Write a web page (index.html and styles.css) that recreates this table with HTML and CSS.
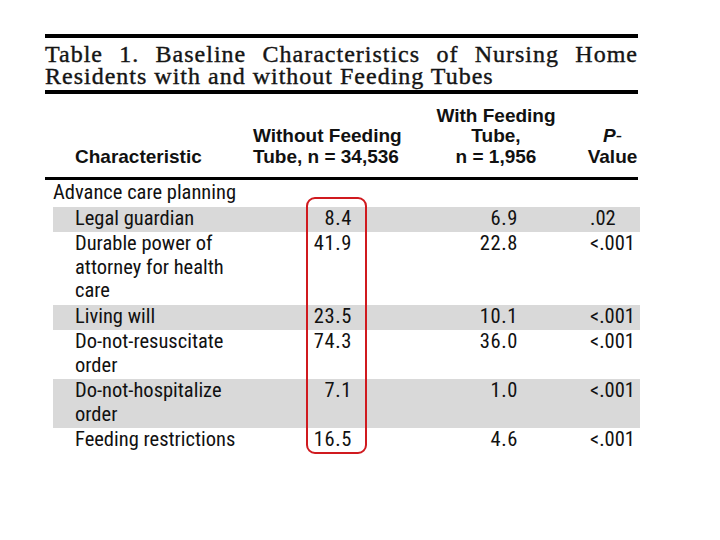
FILE: index.html
```html
<!DOCTYPE html>
<html>
<head>
<meta charset="utf-8">
<link rel="stylesheet" href="styles.css">
</head>
<body>
<div class="page">
  <h1 class="title">Table 1. Baseline Characteristics of Nursing Home Residents with and without Feeding Tubes</h1>
  <div class="head">
    <div class="hc hc-char">Characteristic</div>
    <div class="hc hc-without">Without Feeding<br>Tube, n = 34,536</div>
    <div class="hc hc-with">With Feeding<br>Tube,<br>n = 1,956</div>
    <div class="hc hc-p"><i>P</i><span class="dash">-</span><br>Value</div>
  </div>
  <div class="body">
    <div class="row section"><div class="lab">Advance care planning</div></div>
    <div class="row shade"><div class="lab sub">Legal guardian</div><div class="num">8.4</div><div class="num">6.9</div><div class="pv">.02</div></div>
    <div class="row"><div class="lab sub">Durable power of attorney for health care</div><div class="num">41.9</div><div class="num">22.8</div><div class="pv">&lt;.001</div></div>
    <div class="row shade"><div class="lab sub">Living will</div><div class="num">23.5</div><div class="num">10.1</div><div class="pv">&lt;.001</div></div>
    <div class="row"><div class="lab sub">Do-not-resuscitate order</div><div class="num">74.3</div><div class="num">36.0</div><div class="pv">&lt;.001</div></div>
    <div class="row shade"><div class="lab sub">Do-not-hospitalize order</div><div class="num">7.1</div><div class="num">1.0</div><div class="pv">&lt;.001</div></div>
    <div class="row"><div class="lab sub">Feeding restrictions</div><div class="num">16.5</div><div class="num">4.6</div><div class="pv">&lt;.001</div></div>
    <div class="highlight"></div>
  </div>
</div>
</body>
</html>
```

FILE: styles.css
```css
html, body {
  margin: 0;
  padding: 0;
  background: #ffffff;
}

.page {
  padding: 34px 0 0 45px;
  width: 595px;
}

.title {
  width: 593px;
  margin: 0;
  padding: 5px 0 3px 0;
  border-top: 4px solid #000;
  border-bottom: 4px solid #000;
  font-family: "Liberation Serif", "Times New Roman", serif;
  font-weight: normal;
  font-size: 24px;
  line-height: 22px;
  letter-spacing: 1px;
  -webkit-text-stroke: 0.4px #151515;
  color: #151515;
  text-align: justify;
  text-align-last: left;
}

.head {
  width: 593px;
  height: 86px;
  box-sizing: border-box;
  padding-bottom: 10px;
  border-bottom: 3px solid #000;
  display: grid;
  grid-template-columns: 208px 160px 174px 51px;
  align-items: end;
  font-family: "Liberation Sans", Arial, sans-serif;
  font-weight: bold;
  font-size: 19px;
  line-height: 20.5px;
  color: #111;
}

.hc-char {
  padding-left: 30px;
}

.hc-without {
  text-align: left;
}

.hc-with {
  text-align: center;
  padding-right: 8px;
}

.hc-p {
  text-align: center;
}

.dash {
  font-weight: normal;
}

.body {
  position: relative;
  margin-left: 8px;
  width: 587px;
  font-family: "Roboto Condensed", "Open Sans", sans-serif;
  font-stretch: 75%;
  font-size: 20.5px;
  line-height: 23.5px;
  color: #111;
}

.row {
  display: grid;
  grid-template-columns: 202px 97px 166px 122px;
  padding: 0 0 2px 0;
}

.row.section {
  padding: 1px 0 2px 0;
}

.section .lab {
  grid-column: 1 / -1;
}

.shade {
  background: #d9d9d9;
}

.sub {
  padding-left: 22px;
}

.num {
  text-align: right;
  letter-spacing: 0.6px;
}

.pv {
  padding-left: 72px;
}

.highlight {
  position: absolute;
  left: 253px;
  top: 17px;
  width: 61px;
  height: 257px;
  box-sizing: border-box;
  border: 2.5px solid #d01a1f;
  border-radius: 9px;
}
```
